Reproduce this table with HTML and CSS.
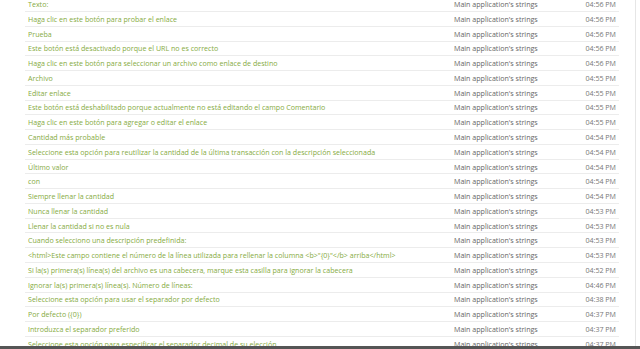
FILE: index.html
```html
<!DOCTYPE html>
<html>
<head>
<meta charset="utf-8">
<link rel="stylesheet" href="styles.css">
</head>
<body>
<div class="page">
  <table class="list">
    <tbody>
      <tr><td class="name">Texto:</td><td class="group">Main application's strings</td><td class="time">04:56 PM</td></tr>
      <tr><td class="name">Haga clic en este botón para probar el enlace</td><td class="group">Main application's strings</td><td class="time">04:56 PM</td></tr>
      <tr><td class="name">Prueba</td><td class="group">Main application's strings</td><td class="time">04:56 PM</td></tr>
      <tr><td class="name">Este botón está desactivado porque el URL no es correcto</td><td class="group">Main application's strings</td><td class="time">04:56 PM</td></tr>
      <tr><td class="name">Haga clic en este botón para seleccionar un archivo como enlace de destino</td><td class="group">Main application's strings</td><td class="time">04:56 PM</td></tr>
      <tr><td class="name">Archivo</td><td class="group">Main application's strings</td><td class="time">04:55 PM</td></tr>
      <tr><td class="name">Editar enlace</td><td class="group">Main application's strings</td><td class="time">04:55 PM</td></tr>
      <tr><td class="name">Este botón está deshabilitado porque actualmente no está editando el campo Comentario</td><td class="group">Main application's strings</td><td class="time">04:55 PM</td></tr>
      <tr><td class="name">Haga clic en este botón para agregar o editar el enlace</td><td class="group">Main application's strings</td><td class="time">04:55 PM</td></tr>
      <tr><td class="name">Cantidad más probable</td><td class="group">Main application's strings</td><td class="time">04:54 PM</td></tr>
      <tr><td class="name">Seleccione esta opción para reutilizar la cantidad de la última transacción con la descripción seleccionada</td><td class="group">Main application's strings</td><td class="time">04:54 PM</td></tr>
      <tr><td class="name">Último valor</td><td class="group">Main application's strings</td><td class="time">04:54 PM</td></tr>
      <tr><td class="name">con</td><td class="group">Main application's strings</td><td class="time">04:54 PM</td></tr>
      <tr><td class="name">Siempre llenar la cantidad</td><td class="group">Main application's strings</td><td class="time">04:54 PM</td></tr>
      <tr><td class="name">Nunca llenar la cantidad</td><td class="group">Main application's strings</td><td class="time">04:53 PM</td></tr>
      <tr><td class="name">Llenar la cantidad si no es nula</td><td class="group">Main application's strings</td><td class="time">04:53 PM</td></tr>
      <tr><td class="name">Cuando selecciono una descripción predefinida:</td><td class="group">Main application's strings</td><td class="time">04:53 PM</td></tr>
      <tr><td class="name">&lt;html&gt;Este campo contiene el número de la línea utilizada para rellenar la columna &lt;b&gt;"{0}"&lt;/b&gt; arriba&lt;/html&gt;</td><td class="group">Main application's strings</td><td class="time">04:53 PM</td></tr>
      <tr><td class="name">Si la(s) primera(s) línea(s) del archivo es una cabecera, marque esta casilla para ignorar la cabecera</td><td class="group">Main application's strings</td><td class="time">04:52 PM</td></tr>
      <tr><td class="name">Ignorar la(s) primera(s) línea(s). Número de líneas:</td><td class="group">Main application's strings</td><td class="time">04:46 PM</td></tr>
      <tr><td class="name">Seleccione esta opción para usar el separador por defecto</td><td class="group">Main application's strings</td><td class="time">04:38 PM</td></tr>
      <tr><td class="name">Por defecto ({0})</td><td class="group">Main application's strings</td><td class="time">04:37 PM</td></tr>
      <tr><td class="name">Introduzca el separador preferido</td><td class="group">Main application's strings</td><td class="time">04:37 PM</td></tr>
      <tr><td class="name">Seleccione esta opción para especificar el separador decimal de su elección</td><td class="group">Main application's strings</td><td class="time">04:37 PM</td></tr>
    </tbody>
  </table>
</div>
<div class="bottom-bar"></div>
</body>
</html>
```

FILE: styles.css
```css
html, body {
  margin: 0;
  padding: 0;
  background: #fff;
  overflow: hidden;
}
body {
  font-family: "Open Sans", "Liberation Sans", sans-serif;
  font-size: 7.1px;
}
.page {
  width: 594px;
  padding: 0 16px 0 25px;
  border-right: 1px solid #e6e6e6;
  margin-top: -3.3px;
  min-height: 400px;
}
.list {
  width: 594px;
  border-collapse: collapse;
  table-layout: fixed;
}
.list tr {
  height: 14.78px;
  border-top: 1px solid #ececec;
}
.list tr:first-child {
  border-top: none;
}
.list td {
  padding: 0 3px;
  white-space: nowrap;
  overflow: hidden;
  line-height: 12px;
}
.name {
  color: #86ab42;
  width: 420px;
}
.group {
  color: #666;
  width: 123px;
}
.time {
  color: #777;
  text-align: right;
}
.bottom-bar {
  position: fixed;
  left: 0;
  right: 0;
  bottom: 0;
  height: 3px;
  background: #555;
}
```
